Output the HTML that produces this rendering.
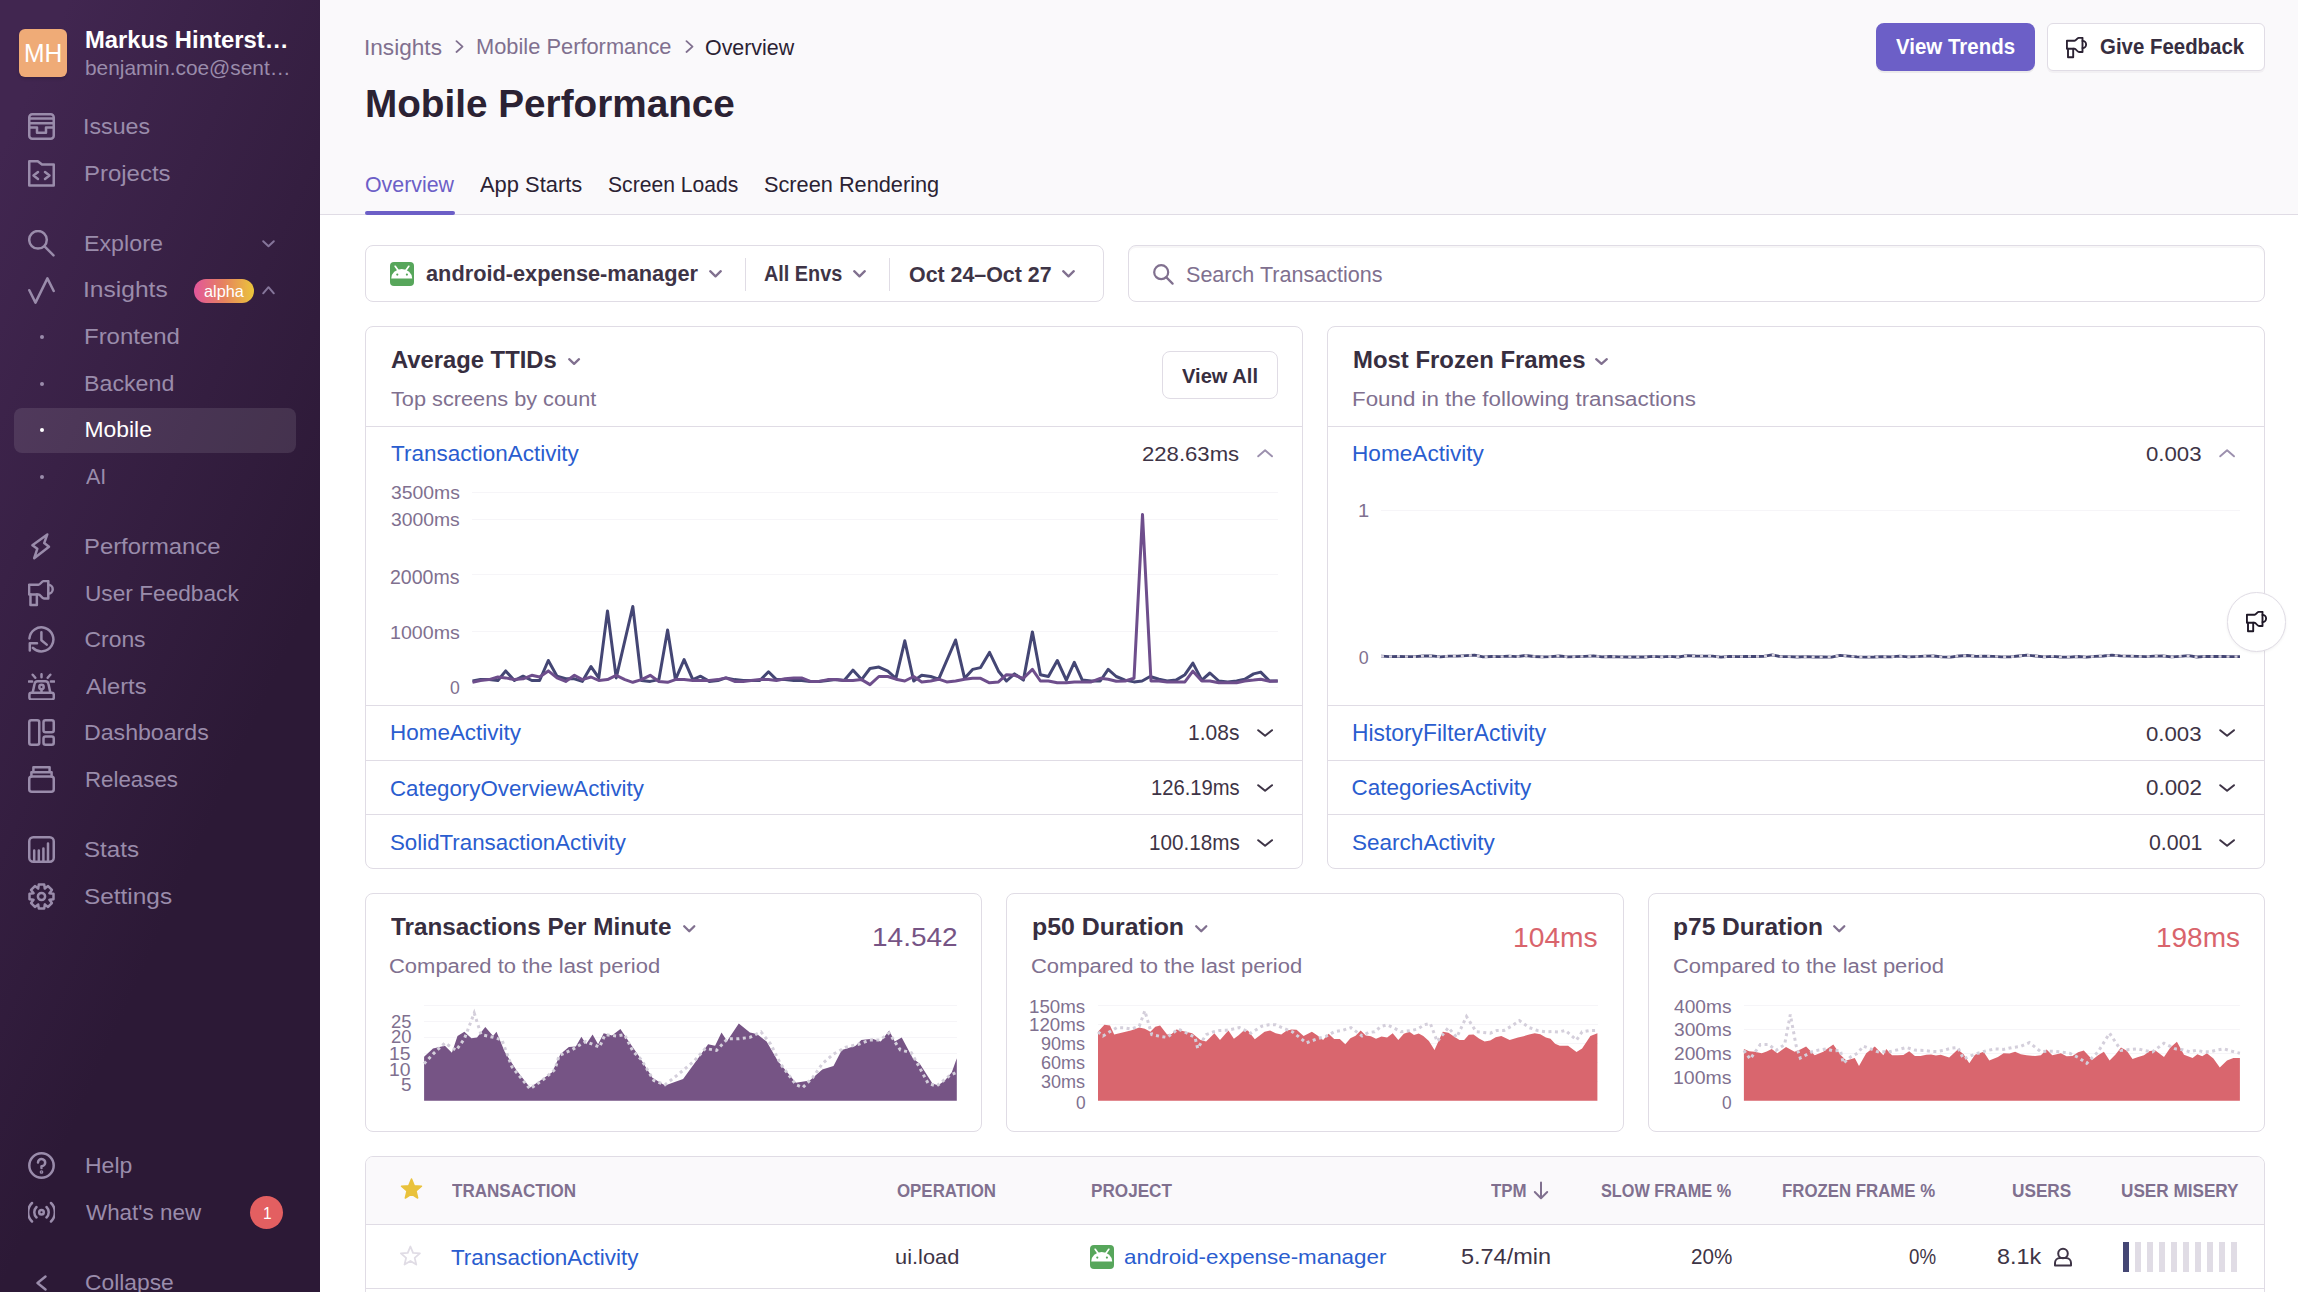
<!DOCTYPE html>
<html><head><meta charset="utf-8"><style>
html,body{margin:0;padding:0;width:2298px;height:1292px;overflow:hidden;background:#fff;font-family:"Liberation Sans",sans-serif}
.a{position:absolute;display:block}
.t{position:absolute;white-space:nowrap;line-height:1;transform-origin:0 0}
</style></head><body>
<div class="a" style="left:0px;top:0px;width:320px;height:1292px;background:linear-gradient(294.17deg,#2c1936 35.57%,#412650 92.42%,#412650 92.42%)"></div>
<div class="a" style="left:19px;top:29px;width:48px;height:48px;background:#efab77;border-radius:6px;box-shadow:0 2px 3px rgba(0,0,0,.15)"></div>
<div class="a" style="left:14px;top:408px;width:282px;height:45px;background:rgba(255,255,255,.1);border-radius:8px"></div>
<div class="a" style="left:40px;top:335px;width:4px;height:4px;background:#9a8cab;border-radius:50%"></div>
<div class="a" style="left:40px;top:381.5px;width:4px;height:4.0px;background:#9a8cab;border-radius:50%"></div>
<div class="a" style="left:40px;top:428px;width:4px;height:4px;background:#fff;border-radius:50%"></div>
<div class="a" style="left:40px;top:474.5px;width:4px;height:4.0px;background:#9a8cab;border-radius:50%"></div>
<div class="a" style="left:194px;top:279px;width:60px;height:24px;background:linear-gradient(90deg,#e2559b,#e6835f 50%,#eac53b);border-radius:12px"></div>
<svg class="a" style="left:262px;top:240px;overflow:visible" width="13" height="7.5" fill="none" stroke="#85759a" stroke-width="2" stroke-linecap="round" stroke-linejoin="round"><path d="M1.2 1.2 L6.5 6.3 L11.8 1.2"/></svg>
<svg class="a" style="left:262px;top:286px;overflow:visible" width="13" height="8.5" fill="none" stroke="#85759a" stroke-width="2" stroke-linecap="round" stroke-linejoin="round"><path d="M1.2 7.3 L6.5 1.2 L11.8 7.3"/></svg>
<div class="a" style="left:250px;top:1196px;width:33px;height:33px;background:#e35f61;border-radius:50%"></div>
<svg class="a" style="left:28px;top:113px" width="27" height="27" viewBox="0 0 27 27" fill="none" stroke="#9a8cab" stroke-width="2.5" stroke-linecap="round" stroke-linejoin="round"><rect x="1.25" y="1.25" width="24.5" height="24.5" rx="3"/><path d="M1.25 5.5H25.75M1.25 10.2H25.75M1.25 14.5H9V19.8H18V14.5H25.75"/></svg>
<svg class="a" style="left:28px;top:160px" width="27" height="27" viewBox="0 0 27 27" fill="none" stroke="#9a8cab" stroke-width="2.5" stroke-linecap="round" stroke-linejoin="round"><path d="M1.25 1.25H9.8L14 4.6H25.75V25.5H1.25Z"/><path d="M10 12L5.5 15.5L10 19M17 12L21.5 15.5L17 19"/></svg>
<svg class="a" style="left:28px;top:230px" width="27" height="27" viewBox="0 0 27 27" fill="none" stroke="#9a8cab" stroke-width="2.5" stroke-linecap="round" stroke-linejoin="round"><circle cx="10" cy="9.8" r="8.8"/><path d="M16.8 16.6L25.5 25.3"/></svg>
<svg class="a" style="left:28px;top:277px" width="27" height="27" viewBox="0 0 27 27" fill="none" stroke="#9a8cab" stroke-width="2.5" stroke-linecap="round" stroke-linejoin="round"><path d="M1.3 13.2L7.5 25.6L19.4 1.4L25.7 14"/></svg>
<svg class="a" style="left:28px;top:533px" width="27" height="27" viewBox="0 0 27 27" fill="none" stroke="#9a8cab" stroke-width="2.5" stroke-linecap="round" stroke-linejoin="round"><path d="M19.3 1.4L4.4 12.3L9.3 15.8L6.2 25.2L21 13.8L16.2 10.1Z"/></svg>
<svg class="a" style="left:28px;top:580px" width="27" height="27" viewBox="0 0 27 27" fill="none" stroke="#9a8cab" stroke-width="2.5" stroke-linecap="round" stroke-linejoin="round"><g transform="scale(1.23)" stroke-width="2.03"><path d="M0.9 3.8H8.5C10.2 3.8 11 0.9 13 0.9H16.5V15H13C11 15 10.2 11.7 8.5 11.7H0.9Z"/><path d="M16.5 3.9A3.6 3.6 0 0 1 16.5 11.1"/><path d="M2 11.7V20.3H7.2V11.7"/></g></svg>
<svg class="a" style="left:28px;top:626px" width="27" height="27" viewBox="0 0 27 27" fill="none" stroke="#9a8cab" stroke-width="2.5" stroke-linecap="round" stroke-linejoin="round"><path d="M1.4 12.5A12 12 0 1 1 4.9 21.9"/><path d="M13.4 6.2V14.2L18.7 18.6"/><path d="M1.8 24.6V17.3H9"/></svg>
<svg class="a" style="left:28px;top:673px" width="27" height="27" viewBox="0 0 27 27" fill="none" stroke="#9a8cab" stroke-width="2.5" stroke-linecap="round" stroke-linejoin="round"><rect x="1.4" y="19.8" width="24.4" height="6.6" rx="2"/><path d="M4.7 19.6L6.6 10.8Q7 8.2 9.6 8.2H17.4Q20 8.2 20.4 10.8L22.3 19.6"/><circle cx="13.5" cy="14" r="2.2"/><path d="M13.5 16.2V19.4M13.5 1.2V4.2M4.7 1.8L7.3 4.8M22.3 1.8L19.7 4.8M0.8 8.5H4.1M26.2 8.5H22.9"/></svg>
<svg class="a" style="left:28px;top:719px" width="27" height="27" viewBox="0 0 27 27" fill="none" stroke="#9a8cab" stroke-width="2.5" stroke-linecap="round" stroke-linejoin="round"><rect x="1.25" y="1.25" width="10" height="24.5" rx="2"/><rect x="15.5" y="1.25" width="10.25" height="12" rx="2"/><rect x="15.5" y="17.6" width="10.25" height="8.15" rx="2"/></svg>
<svg class="a" style="left:28px;top:766px" width="27" height="27" viewBox="0 0 27 27" fill="none" stroke="#9a8cab" stroke-width="2.5" stroke-linecap="round" stroke-linejoin="round"><rect x="1.25" y="10.5" width="24.5" height="15.25" rx="2.5"/><path d="M3.4 10.5V6.2H23.6V10.5M5.4 6.2V1.25H21.6V6.2"/></svg>
<svg class="a" style="left:28px;top:836px" width="27" height="27" viewBox="0 0 27 27" fill="none" stroke="#9a8cab" stroke-width="2.5" stroke-linecap="round" stroke-linejoin="round"><rect x="1.25" y="1.25" width="24.5" height="24.5" rx="4"/><path d="M6.2 25V14.5M10.8 25V14.5M15.4 25V12.5M20 25V7.5"/></svg>
<svg class="a" style="left:28px;top:883px" width="27" height="27" viewBox="0 0 27 27" fill="none" stroke="#9a8cab" stroke-width="2.5" stroke-linecap="round" stroke-linejoin="round"><path d="M25.50 10.82 L25.50 16.18 L21.42 16.85 L21.47 16.73 L23.89 20.09 L20.09 23.89 L16.73 21.47 L16.85 21.42 L16.18 25.50 L10.82 25.50 L10.15 21.42 L10.27 21.47 L6.91 23.89 L3.11 20.09 L5.53 16.73 L5.58 16.85 L1.50 16.18 L1.50 10.82 L5.58 10.15 L5.53 10.27 L3.11 6.91 L6.91 3.11 L10.27 5.53 L10.15 5.58 L10.82 1.50 L16.18 1.50 L16.85 5.58 L16.73 5.53 L20.09 3.11 L23.89 6.91 L21.47 10.27 L21.42 10.15Z"/><circle cx="13.5" cy="13.5" r="3.6"/></svg>
<svg class="a" style="left:28px;top:1152px" width="27" height="27" viewBox="0 0 27 27" fill="none" stroke="#9a8cab" stroke-width="2.5" stroke-linecap="round" stroke-linejoin="round"><circle cx="13.5" cy="13.5" r="12.2"/><path d="M10 10.5A3.6 3.6 0 1 1 13.5 14.2V16"/><circle cx="13.5" cy="20" r="0.6" fill="#9586a5"/></svg>
<svg class="a" style="left:28px;top:1199px" width="27" height="27" viewBox="0 0 27 27" fill="none" stroke="#9a8cab" stroke-width="2.5" stroke-linecap="round" stroke-linejoin="round"><circle cx="13.5" cy="13.2" r="2.3"/><path d="M8.5 8A7.3 7.3 0 0 0 8.5 18.5M18.5 8A7.3 7.3 0 0 1 18.5 18.5M4 4A13 13 0 0 0 4 22.5M23 4A13 13 0 0 1 23 22.5"/></svg>
<svg class="a" style="left:35px;top:1275px" width="13" height="16" fill="none" stroke="#9a8cab" stroke-width="2.4" stroke-linecap="round" stroke-linejoin="round"><path d="M10.5 1.5L2.5 8L10.5 14.5"/></svg>
<div class="a" style="left:320px;top:0px;width:1978px;height:214px;background:#faf9fb;border-bottom:1px solid #e0dce5"></div>
<div class="a" style="left:365px;top:211px;width:90px;height:4px;background:#6c5fc7;border-radius:2px"></div>
<svg class="a" style="left:455px;top:40px" width="10" height="14" fill="none" stroke="#80708f" stroke-width="1.8" stroke-linecap="round" stroke-linejoin="round"><path d="M1.5 1.2L7.5 6.6L1.5 12"/></svg>
<svg class="a" style="left:684.5px;top:40px" width="10" height="14" fill="none" stroke="#80708f" stroke-width="1.8" stroke-linecap="round" stroke-linejoin="round"><path d="M1.5 1.2L7.5 6.6L1.5 12"/></svg>
<div class="a" style="left:1876px;top:23px;width:159px;height:48px;background:#6c5fc7;border-radius:8px;box-shadow:0 2px 0 rgba(0,0,0,.06)"></div>
<div class="a" style="left:2047px;top:23px;width:218px;height:48px;background:#fff;border:1px solid #e0dce5;border-radius:6px;box-sizing:border-box;box-shadow:0 2px 0 rgba(43,34,51,.04)"></div>
<svg class="a" style="left:2066px;top:37px" width="22" height="22" viewBox="0 0 22 22" fill="none" stroke="#2b2233" stroke-width="1.9" stroke-linecap="round" stroke-linejoin="round"><path d="M0.9 3.8H8.5C10.2 3.8 11 0.9 13 0.9H16.5V15H13C11 15 10.2 11.7 8.5 11.7H0.9Z"/><path d="M16.5 3.9A3.6 3.6 0 0 1 16.5 11.1"/><path d="M2 11.7V20.3H7.2V11.7"/></svg>
<div class="a" style="left:365px;top:245px;width:739px;height:57px;border:1px solid #e0dce5;border-radius:8px;box-sizing:border-box"></div>
<div class="a" style="left:745px;top:257.5px;width:1px;height:33.0px;background:#e0dce5"></div>
<div class="a" style="left:889px;top:257.5px;width:1px;height:33.0px;background:#e0dce5"></div>
<svg class="a" style="left:390px;top:262px" width="24" height="24"><rect width="24" height="24" rx="4" fill="#57a65b"/><path d="M1.2 16.6A10.5 9.6 0 0 1 22.2 16.6Z" fill="#fff"/><path d="M5.2 4.3L8.4 8.8M18.8 4.3L15.6 8.8" stroke="#fff" stroke-width="1.7" stroke-linecap="round"/><circle cx="7.3" cy="12.6" r="1.1" fill="#57a65b"/><circle cx="16.9" cy="12.6" r="1.1" fill="#57a65b"/></svg>
<svg class="a" style="left:709px;top:270px;overflow:visible" width="13" height="7.5" fill="none" stroke="#80708f" stroke-width="2.3" stroke-linecap="round" stroke-linejoin="round"><path d="M1.2 1.2 L6.5 6.3 L11.8 1.2"/></svg>
<svg class="a" style="left:853px;top:270px;overflow:visible" width="13" height="7.5" fill="none" stroke="#80708f" stroke-width="2.3" stroke-linecap="round" stroke-linejoin="round"><path d="M1.2 1.2 L6.5 6.3 L11.8 1.2"/></svg>
<svg class="a" style="left:1062px;top:270px;overflow:visible" width="13" height="7.5" fill="none" stroke="#80708f" stroke-width="2.3" stroke-linecap="round" stroke-linejoin="round"><path d="M1.2 1.2 L6.5 6.3 L11.8 1.2"/></svg>
<div class="a" style="left:1128px;top:245px;width:1137px;height:57px;border:1px solid #e0dce5;border-radius:8px;box-sizing:border-box;box-shadow:inset 0 2px 0 rgba(43,34,51,.04)"></div>
<svg class="a" style="left:1153px;top:263.5px" width="21" height="21" viewBox="0 0 21 21" fill="none" stroke="#80708f" stroke-width="2.2" stroke-linecap="round" stroke-linejoin="round"><circle cx="8.2" cy="8.2" r="7"/><path d="M13.4 13.4L19.6 19.6"/></svg>
<div class="a" style="left:365px;top:326px;width:938px;height:543px;border:1px solid #e0dce5;border-radius:8px;box-sizing:border-box"></div>
<div class="a" style="left:1327px;top:326px;width:938px;height:543px;border:1px solid #e0dce5;border-radius:8px;box-sizing:border-box"></div>
<div class="a" style="left:366px;top:426px;width:936px;height:1px;background:#e0dce5"></div>
<div class="a" style="left:1328px;top:426px;width:936px;height:1px;background:#e0dce5"></div>
<div class="a" style="left:366px;top:705px;width:936px;height:1px;background:#e0dce5"></div>
<div class="a" style="left:1328px;top:705px;width:936px;height:1px;background:#e0dce5"></div>
<div class="a" style="left:366px;top:760px;width:936px;height:1px;background:#e0dce5"></div>
<div class="a" style="left:1328px;top:760px;width:936px;height:1px;background:#e0dce5"></div>
<div class="a" style="left:366px;top:814px;width:936px;height:1px;background:#e0dce5"></div>
<div class="a" style="left:1328px;top:814px;width:936px;height:1px;background:#e0dce5"></div>
<div class="a" style="left:1162px;top:351px;width:116px;height:48px;border:1px solid #e0dce5;border-radius:8px;box-sizing:border-box"></div>
<svg class="a" style="left:567.6px;top:357.5px;overflow:visible" width="12.199999999999932" height="7.0" fill="none" stroke="#80708f" stroke-width="2.3" stroke-linecap="round" stroke-linejoin="round"><path d="M1.2 1.2 L6.099999999999966 5.8 L10.999999999999932 1.2"/></svg>
<svg class="a" style="left:1595px;top:357.5px;overflow:visible" width="13" height="7.0" fill="none" stroke="#80708f" stroke-width="2.3" stroke-linecap="round" stroke-linejoin="round"><path d="M1.2 1.2 L6.5 5.8 L11.8 1.2"/></svg>
<svg class="a" style="left:1256.8px;top:449px;overflow:visible" width="16.200000000000045" height="8.5" fill="none" stroke="#9c90ae" stroke-width="1.9" stroke-linecap="round" stroke-linejoin="round"><path d="M1.2 7.3 L8.100000000000023 1.2 L15.000000000000046 7.3"/></svg>
<svg class="a" style="left:2218.8px;top:449px;overflow:visible" width="16.199999999999818" height="8.5" fill="none" stroke="#9c90ae" stroke-width="1.9" stroke-linecap="round" stroke-linejoin="round"><path d="M1.2 7.3 L8.099999999999909 1.2 L14.999999999999819 7.3"/></svg>
<svg class="a" style="left:1256.8px;top:729.0px;overflow:visible" width="16.200000000000045" height="8.0" fill="none" stroke="#3e3446" stroke-width="2.0" stroke-linecap="round" stroke-linejoin="round"><path d="M1.2 1.2 L8.100000000000023 6.8 L15.000000000000046 1.2"/></svg>
<svg class="a" style="left:2218.8px;top:729.0px;overflow:visible" width="16.199999999999818" height="8.0" fill="none" stroke="#3e3446" stroke-width="2.0" stroke-linecap="round" stroke-linejoin="round"><path d="M1.2 1.2 L8.099999999999909 6.8 L14.999999999999819 1.2"/></svg>
<svg class="a" style="left:1256.8px;top:784.0px;overflow:visible" width="16.200000000000045" height="8.0" fill="none" stroke="#3e3446" stroke-width="2.0" stroke-linecap="round" stroke-linejoin="round"><path d="M1.2 1.2 L8.100000000000023 6.8 L15.000000000000046 1.2"/></svg>
<svg class="a" style="left:2218.8px;top:784.0px;overflow:visible" width="16.199999999999818" height="8.0" fill="none" stroke="#3e3446" stroke-width="2.0" stroke-linecap="round" stroke-linejoin="round"><path d="M1.2 1.2 L8.099999999999909 6.8 L14.999999999999819 1.2"/></svg>
<svg class="a" style="left:1256.8px;top:838.5px;overflow:visible" width="16.200000000000045" height="8.0" fill="none" stroke="#3e3446" stroke-width="2.0" stroke-linecap="round" stroke-linejoin="round"><path d="M1.2 1.2 L8.100000000000023 6.8 L15.000000000000046 1.2"/></svg>
<svg class="a" style="left:2218.8px;top:838.5px;overflow:visible" width="16.199999999999818" height="8.0" fill="none" stroke="#3e3446" stroke-width="2.0" stroke-linecap="round" stroke-linejoin="round"><path d="M1.2 1.2 L8.099999999999909 6.8 L14.999999999999819 1.2"/></svg>
<div class="a" style="left:365px;top:893px;width:617px;height:239px;border:1px solid #e0dce5;border-radius:8px;box-sizing:border-box"></div>
<div class="a" style="left:1006px;top:893px;width:618px;height:239px;border:1px solid #e0dce5;border-radius:8px;box-sizing:border-box"></div>
<div class="a" style="left:1648px;top:893px;width:617px;height:239px;border:1px solid #e0dce5;border-radius:8px;box-sizing:border-box"></div>
<svg class="a" style="left:682.5px;top:925px;overflow:visible" width="12.5" height="7.5" fill="none" stroke="#80708f" stroke-width="2.3" stroke-linecap="round" stroke-linejoin="round"><path d="M1.2 1.2 L6.25 6.3 L11.3 1.2"/></svg>
<svg class="a" style="left:1194.5px;top:925px;overflow:visible" width="12.5" height="7.5" fill="none" stroke="#80708f" stroke-width="2.3" stroke-linecap="round" stroke-linejoin="round"><path d="M1.2 1.2 L6.25 6.3 L11.3 1.2"/></svg>
<svg class="a" style="left:1833px;top:925px;overflow:visible" width="12.5" height="7.5" fill="none" stroke="#80708f" stroke-width="2.3" stroke-linecap="round" stroke-linejoin="round"><path d="M1.2 1.2 L6.25 6.3 L11.3 1.2"/></svg>
<div class="a" style="left:472px;top:492px;width:806px;height:1px;background:#f6f5f8"></div>
<div class="a" style="left:472px;top:519px;width:806px;height:1px;background:#f6f5f8"></div>
<div class="a" style="left:472px;top:574px;width:806px;height:1px;background:#f6f5f8"></div>
<div class="a" style="left:472px;top:631px;width:806px;height:1px;background:#f6f5f8"></div>
<div class="a" style="left:472px;top:687px;width:806px;height:1px;background:#f6f5f8"></div>
<div class="a" style="left:1381px;top:510px;width:859px;height:1px;background:#f6f5f8"></div>
<svg class="a" style="left:0;top:0" width="2298" height="1292" fill="none" stroke-linejoin="round"><polyline points="472.5,680.9 480.4,679.6 489.1,679.6 497.9,680.5 505.7,670.9 514.4,680.5 523.1,676.2 531.8,680.5 539.6,680.5 548.3,660.5 557.0,676.2 565.7,678.8 574.4,678.8 582.3,681.4 591.0,666.6 598.8,677.9 607.5,610.9 616.2,677.9 632.8,606.5 641.5,680.5 650.2,681.4 658.9,679.6 667.6,630.0 675.4,679.6 684.1,659.6 692.8,679.6 700.6,676.2 709.3,681.4 718.0,680.5 725.9,677.9 734.6,679.6 743.3,680.5 751.1,680.5 759.8,680.5 768.5,671.8 776.4,679.6 785.1,679.6 793.8,680.5 801.6,680.5 810.3,681.4 819.0,681.4 827.7,680.5 835.5,679.6 844.2,680.5 852.9,670.1 861.6,679.6 870.0,668.5 878.9,667.1 887.8,671.2 895.9,678.3 904.8,640.8 913.7,681.0 921.7,675.3 930.7,676.5 938.7,679.2 955.6,640.0 964.6,678.3 972.6,669.4 980.6,667.6 989.5,652.4 998.5,671.2 1006.5,681.0 1014.5,673.9 1023.4,680.1 1032.4,631.9 1040.4,674.7 1048.4,676.5 1057.3,660.5 1066.3,680.1 1074.3,662.3 1082.3,680.1 1091.2,681.0 1100.2,681.0 1108.2,669.4 1116.2,676.5 1125.1,680.1 1134.0,681.9 1142.1,681.0 1150.1,676.5 1159.0,679.2 1167.1,681.0 1176.0,680.1 1184.9,674.7 1192.9,663.1 1201.8,680.1 1209.9,673.0 1218.8,681.0 1227.7,681.9 1236.6,681.0 1244.7,679.2 1253.6,673.9 1260.7,672.1 1269.6,681.0 1277.7,681.0" stroke="#444674" stroke-width="3"/><polyline points="472.5,682.3 480.4,680.5 489.1,679.6 497.9,677.0 505.7,677.9 514.4,679.6 523.1,678.8 531.8,675.3 539.6,677.0 548.3,670.9 557.0,677.9 565.7,681.4 574.4,675.3 582.3,679.6 591.0,677.0 598.8,680.5 607.5,679.6 616.2,675.3 624.9,679.6 632.8,682.3 641.5,679.6 650.2,675.3 658.9,681.4 667.6,682.3 675.4,679.6 684.1,679.6 692.8,680.5 700.6,680.5 709.3,680.5 718.0,679.6 725.9,677.9 734.6,681.4 743.3,681.4 751.1,680.5 759.8,679.6 768.5,679.6 776.4,680.5 785.1,678.8 793.8,677.9 801.6,677.9 810.3,681.4 819.0,681.4 827.7,679.6 835.5,679.6 844.2,680.5 852.9,680.5 861.6,679.6 870.0,684.6 878.9,676.5 887.8,676.5 895.9,679.2 904.8,681.0 913.7,676.5 921.7,681.9 930.7,681.0 938.7,679.2 946.7,681.9 955.6,681.0 964.6,679.2 972.6,678.3 980.6,678.3 989.5,682.8 998.5,681.9 1006.5,674.7 1014.5,675.3 1023.4,678.3 1032.4,669.4 1040.4,681.0 1048.4,681.0 1057.3,682.8 1066.3,682.8 1074.3,681.9 1082.3,681.9 1091.2,681.9 1100.2,678.3 1108.2,679.2 1116.2,681.3 1125.1,681.0 1134.0,678.3 1142.5,514.5 1151.0,681.0 1159.0,681.0 1167.1,681.9 1176.0,681.9 1184.9,681.9 1192.9,671.2 1201.8,681.0 1209.9,681.0 1218.8,682.8 1227.7,682.8 1236.6,682.8 1244.7,681.0 1253.6,680.1 1260.7,679.2 1269.6,681.3 1277.7,681.0" stroke="#6e4e8c" stroke-width="3"/></svg>
<svg class="a" style="left:0;top:0" width="2298" height="1292" fill="none"><polyline points="1381.0,656.2 1389.5,656.6 1398.0,656.3 1406.5,656.6 1415.0,656.7 1423.5,656.0 1432.0,655.9 1440.5,656.9 1449.0,656.2 1457.5,656.2 1466.0,655.7 1474.5,655.1 1483.0,656.9 1491.5,656.5 1500.0,656.7 1508.5,656.1 1517.0,656.7 1525.5,655.5 1534.0,656.5 1542.5,656.8 1551.0,656.7 1559.5,656.0 1568.0,656.8 1576.5,656.6 1585.0,656.3 1593.5,655.9 1602.0,656.9 1610.5,656.5 1619.0,656.8 1627.5,657.0 1636.0,656.8 1644.5,657.0 1653.0,656.4 1661.5,656.9 1670.0,656.4 1678.5,657.0 1687.0,655.6 1695.5,656.0 1704.0,656.1 1712.5,656.2 1721.0,657.1 1729.5,656.4 1738.0,656.7 1746.5,656.3 1755.0,656.5 1763.5,656.4 1772.0,654.9 1780.5,656.6 1789.0,656.6 1797.5,657.0 1806.0,656.7 1814.5,657.0 1823.0,656.9 1831.5,657.1 1840.0,655.3 1848.5,656.1 1857.0,656.9 1865.5,657.1 1874.0,657.0 1882.5,656.6 1891.0,656.8 1899.5,656.2 1908.0,656.9 1916.5,656.6 1925.0,656.2 1933.5,656.0 1942.0,656.9 1950.5,657.1 1959.0,656.0 1967.5,655.5 1976.0,656.4 1984.5,656.1 1993.0,656.3 2001.5,656.8 2010.0,656.9 2018.5,656.0 2027.0,655.2 2035.5,656.0 2044.0,656.8 2052.5,656.3 2061.0,657.0 2069.5,657.1 2078.0,656.5 2086.5,657.1 2095.0,656.3 2103.5,656.0 2112.0,655.2 2120.5,655.9 2129.0,656.1 2137.5,656.4 2146.0,656.6 2154.5,656.1 2163.0,656.0 2171.5,656.9 2180.0,656.3 2188.5,655.7 2197.0,657.0 2205.5,656.4 2214.0,656.5 2222.5,656.5 2231.0,656.7 2240.0,656.6" stroke="#444674" stroke-width="2.8" stroke-linejoin="round"/><polyline points="1381.0,656.2 1389.5,656.6 1398.0,656.3 1406.5,656.6 1415.0,656.7 1423.5,656.0 1432.0,655.9 1440.5,656.9 1449.0,656.2 1457.5,656.2 1466.0,655.7 1474.5,655.1 1483.0,656.9 1491.5,656.5 1500.0,656.7 1508.5,656.1 1517.0,656.7 1525.5,655.5 1534.0,656.5 1542.5,656.8 1551.0,656.7 1559.5,656.0 1568.0,656.8 1576.5,656.6 1585.0,656.3 1593.5,655.9 1602.0,656.9 1610.5,656.5 1619.0,656.8 1627.5,657.0 1636.0,656.8 1644.5,657.0 1653.0,656.4 1661.5,656.9 1670.0,656.4 1678.5,657.0 1687.0,655.6 1695.5,656.0 1704.0,656.1 1712.5,656.2 1721.0,657.1 1729.5,656.4 1738.0,656.7 1746.5,656.3 1755.0,656.5 1763.5,656.4 1772.0,654.9 1780.5,656.6 1789.0,656.6 1797.5,657.0 1806.0,656.7 1814.5,657.0 1823.0,656.9 1831.5,657.1 1840.0,655.3 1848.5,656.1 1857.0,656.9 1865.5,657.1 1874.0,657.0 1882.5,656.6 1891.0,656.8 1899.5,656.2 1908.0,656.9 1916.5,656.6 1925.0,656.2 1933.5,656.0 1942.0,656.9 1950.5,657.1 1959.0,656.0 1967.5,655.5 1976.0,656.4 1984.5,656.1 1993.0,656.3 2001.5,656.8 2010.0,656.9 2018.5,656.0 2027.0,655.2 2035.5,656.0 2044.0,656.8 2052.5,656.3 2061.0,657.0 2069.5,657.1 2078.0,656.5 2086.5,657.1 2095.0,656.3 2103.5,656.0 2112.0,655.2 2120.5,655.9 2129.0,656.1 2137.5,656.4 2146.0,656.6 2154.5,656.1 2163.0,656.0 2171.5,656.9 2180.0,656.3 2188.5,655.7 2197.0,657.0 2205.5,656.4 2214.0,656.5 2222.5,656.5 2231.0,656.7 2240.0,656.6" stroke="#d9d4e0" stroke-width="2.4" stroke-dasharray="3 5"/></svg>
<div class="a" style="left:424px;top:1005.2px;width:533px;height:1.0px;background:#f6f5f8"></div>
<div class="a" style="left:424px;top:1020.5px;width:533px;height:1.0px;background:#f6f5f8"></div>
<div class="a" style="left:424px;top:1036.5px;width:533px;height:1.0px;background:#f6f5f8"></div>
<div class="a" style="left:424px;top:1052.5px;width:533px;height:1.0px;background:#f6f5f8"></div>
<div class="a" style="left:424px;top:1068.2px;width:533px;height:1.0px;background:#f6f5f8"></div>
<div class="a" style="left:424px;top:1083.9px;width:533px;height:1.0px;background:#f6f5f8"></div>
<div class="a" style="left:1098px;top:1005.2px;width:500px;height:1.0px;background:#f6f5f8"></div>
<div class="a" style="left:1098px;top:1024.2px;width:500px;height:1.0px;background:#f6f5f8"></div>
<div class="a" style="left:1098px;top:1043.2px;width:500px;height:1.0px;background:#f6f5f8"></div>
<div class="a" style="left:1098px;top:1062.2px;width:500px;height:1.0px;background:#f6f5f8"></div>
<div class="a" style="left:1098px;top:1081.2px;width:500px;height:1.0px;background:#f6f5f8"></div>
<div class="a" style="left:1744px;top:1005.2px;width:496px;height:1.0px;background:#f6f5f8"></div>
<div class="a" style="left:1744px;top:1029.0px;width:496px;height:1.0px;background:#f6f5f8"></div>
<div class="a" style="left:1744px;top:1052.8px;width:496px;height:1.0px;background:#f6f5f8"></div>
<div class="a" style="left:1744px;top:1076.5px;width:496px;height:1.0px;background:#f6f5f8"></div>
<svg class="a" style="left:0;top:0" width="2298" height="1292"><path d="M424.1 1056.8 L433.0 1048.5 L444.9 1045.7 L451.9 1052.7 L457.5 1036.0 L464.4 1031.8 L471.4 1038.2 L477.0 1037.4 L485.3 1027.0 L493.1 1036.0 L496.5 1031.8 L504.8 1052.1 L516.0 1069.4 L529.9 1087.5 L538.2 1081.9 L552.2 1072.2 L560.5 1054.1 L568.9 1047.1 L575.8 1046.5 L581.4 1036.8 L586.1 1044.3 L592.6 1034.6 L598.1 1044.3 L603.7 1033.2 L612.0 1035.4 L620.4 1029.0 L628.8 1041.5 L638.5 1055.5 L652.4 1077.7 L665.0 1085.5 L683.1 1079.1 L694.2 1063.8 L708.1 1044.3 L715.1 1045.7 L721.5 1032.6 L727.1 1041.0 L738.8 1023.4 L749.9 1032.6 L756.9 1034.0 L766.6 1041.5 L777.8 1061.0 L795.9 1082.8 L809.8 1080.5 L822.3 1069.4 L833.5 1066.0 L841.8 1049.9 L855.7 1045.7 L861.3 1040.1 L872.4 1038.7 L880.8 1041.5 L889.2 1030.4 L894.7 1041.5 L901.7 1037.4 L912.8 1058.2 L919.8 1063.8 L932.3 1083.3 L937.9 1085.5 L944.9 1080.5 L951.8 1072.2 L956.8 1058.2 L956.8 1100.8 L424.1 1100.8Z" fill="#765485"/><polyline points="424.1,1063.8 433.0,1054.1 444.9,1042.9 456.1,1050.4 464.4,1038.7 474.2,1013.1 481.1,1034.6 493.7,1037.4 502.0,1040.1 511.8,1066.6 529.9,1088.9 543.8,1079.1 555.0,1069.4 559.1,1055.5 571.7,1049.9 585.6,1041.5 599.5,1047.1 605.1,1034.6 616.2,1036.0 624.6,1034.6 632.9,1051.3 641.3,1059.6 653.8,1080.5 665.0,1084.7 677.5,1075.0 694.2,1061.0 705.3,1048.5 716.5,1050.4 727.6,1038.7 738.8,1038.7 749.9,1037.4 761.0,1031.8 770.8,1044.3 780.5,1063.8 795.9,1084.7 802.8,1087.5 812.6,1077.7 822.3,1063.8 833.5,1054.1 846.0,1047.1 858.5,1044.3 869.7,1040.1 879.4,1040.1 889.2,1033.2 900.3,1049.9 911.4,1052.7 928.1,1083.3 936.5,1086.1 950.4,1075.0 956.8,1072.2" fill="none" stroke="#d4cfdb" stroke-width="3" stroke-dasharray="3 3.5"/><path d="M1098.0 1031.8 L1104.4 1024.8 L1110.0 1025.4 L1114.2 1034.6 L1122.5 1032.6 L1130.9 1030.4 L1139.3 1027.6 L1144.8 1028.8 L1150.4 1031.8 L1155.3 1026.8 L1160.1 1025.4 L1167.1 1034.6 L1171.7 1033.9 L1176.4 1029.6 L1181.0 1030.4 L1186.6 1032.0 L1192.2 1033.2 L1200.5 1040.1 L1206.1 1041.5 L1214.4 1033.2 L1220.0 1040.1 L1228.4 1030.4 L1233.9 1038.7 L1238.6 1035.3 L1243.2 1031.0 L1247.9 1030.4 L1254.8 1039.3 L1259.7 1035.6 L1264.6 1031.8 L1270.1 1030.4 L1275.7 1033.3 L1281.3 1034.6 L1286.4 1030.8 L1291.5 1029.4 L1296.6 1029.8 L1303.6 1036.0 L1311.9 1031.8 L1317.5 1035.6 L1323.1 1040.1 L1328.6 1033.7 L1334.2 1038.9 L1339.8 1038.9 L1345.3 1044.3 L1350.4 1038.3 L1355.6 1035.7 L1360.7 1030.4 L1365.8 1035.4 L1370.9 1036.3 L1376.0 1038.7 L1381.5 1036.4 L1387.1 1037.4 L1392.7 1033.2 L1398.3 1040.1 L1403.8 1033.7 L1409.4 1031.8 L1414.0 1035.0 L1418.7 1033.5 L1423.3 1036.0 L1428.9 1041.1 L1434.5 1049.9 L1442.8 1031.8 L1448.4 1032.7 L1454.0 1036.4 L1459.5 1040.1 L1464.2 1039.9 L1468.8 1034.8 L1473.5 1034.6 L1479.0 1038.5 L1484.6 1041.5 L1490.2 1040.4 L1495.7 1037.2 L1501.3 1036.0 L1509.7 1040.1 L1518.0 1037.4 L1523.6 1036.2 L1529.2 1034.6 L1534.7 1033.3 L1540.3 1034.2 L1545.9 1037.4 L1550.5 1038.7 L1555.1 1043.8 L1559.8 1045.7 L1568.1 1045.7 L1576.5 1052.1 L1582.1 1048.5 L1590.4 1036.0 L1597.4 1033.2 L1597.4 1100.8 L1098.0 1100.8Z" fill="#d9666e"/><polyline points="1098.0,1031.8 1103.0,1036.0 1110.0,1031.6 1117.0,1027.6 1123.9,1027.7 1130.9,1029.0 1139.3,1026.2 1144.8,1010.9 1151.8,1034.6 1159.4,1036.2 1167.1,1037.4 1178.2,1029.0 1186.6,1033.0 1195.0,1037.4 1197.7,1048.5 1206.1,1034.6 1213.1,1031.9 1220.0,1030.4 1226.5,1030.3 1233.0,1029.1 1239.5,1027.6 1250.7,1033.2 1261.8,1026.2 1268.8,1024.8 1275.7,1024.8 1284.1,1028.5 1292.4,1031.8 1299.4,1037.4 1306.4,1042.9 1317.5,1038.7 1325.8,1036.4 1334.2,1031.8 1342.6,1030.4 1350.9,1027.6 1362.1,1036.0 1368.3,1032.5 1374.6,1031.8 1380.9,1026.5 1387.1,1024.8 1394.1,1028.1 1401.0,1031.8 1412.2,1030.4 1418.2,1028.8 1424.3,1024.7 1430.3,1023.4 1437.2,1041.5 1448.4,1027.6 1456.7,1037.4 1466.5,1016.5 1476.2,1031.8 1483.2,1032.4 1490.2,1033.2 1497.1,1030.4 1504.1,1030.4 1511.7,1026.0 1519.4,1020.6 1529.2,1027.6 1537.5,1030.5 1545.9,1031.8 1552.4,1031.5 1558.9,1032.0 1565.4,1030.4 1576.5,1040.1 1582.1,1031.8 1589.7,1030.5 1597.4,1030.4" fill="none" stroke="#d4cfdb" stroke-width="3" stroke-dasharray="3 3.5"/><path d="M1743.9 1048.9 L1749.2 1051.3 L1754.5 1051.8 L1761.7 1053.2 L1766.7 1051.6 L1771.7 1048.9 L1777.4 1053.2 L1786.0 1046.9 L1794.6 1051.8 L1800.3 1049.6 L1806.1 1046.6 L1814.7 1055.2 L1823.3 1051.8 L1828.3 1048.0 L1833.3 1044.6 L1840.4 1054.7 L1846.2 1060.4 L1854.8 1058.1 L1859.0 1066.1 L1866.2 1053.2 L1874.8 1046.6 L1883.4 1055.2 L1886.2 1048.9 L1892.0 1055.2 L1897.7 1055.2 L1903.4 1054.9 L1909.2 1051.2 L1914.9 1055.9 L1920.6 1056.1 L1926.3 1054.7 L1931.1 1054.5 L1935.9 1055.5 L1940.7 1054.7 L1949.2 1057.5 L1957.8 1049.5 L1963.6 1054.2 L1969.3 1063.3 L1975.0 1054.7 L1983.6 1051.8 L1989.3 1060.4 L1997.9 1057.0 L2003.6 1053.2 L2009.4 1053.5 L2015.1 1051.8 L2020.8 1054.3 L2026.6 1055.2 L2035.1 1056.1 L2040.9 1055.3 L2046.6 1049.5 L2052.3 1055.2 L2060.9 1053.2 L2066.6 1056.3 L2072.4 1056.1 L2078.1 1052.2 L2083.8 1050.4 L2092.4 1059.8 L2098.1 1055.2 L2103.9 1051.8 L2109.6 1060.4 L2115.3 1054.8 L2121.0 1047.5 L2126.8 1050.8 L2132.5 1059.0 L2138.2 1056.9 L2144.0 1055.2 L2149.7 1051.1 L2155.4 1050.4 L2164.0 1057.0 L2170.4 1047.5 L2176.9 1041.8 L2184.0 1054.7 L2192.6 1058.1 L2197.4 1054.3 L2202.2 1056.2 L2206.9 1053.2 L2213.4 1058.5 L2219.8 1067.6 L2227.0 1060.4 L2233.4 1058.0 L2239.9 1058.1 L2239.9 1100.8 L1743.9 1100.8Z" fill="#d9666e"/><polyline points="1743.9,1050.4 1750.2,1059.0 1760.3,1044.6 1768.9,1044.6 1776.0,1050.4 1784.6,1044.6 1790.3,1014.6 1796.1,1045.5 1800.3,1058.1 1811.8,1051.8 1819.0,1050.0 1826.1,1048.9 1833.3,1050.8 1840.4,1050.4 1843.3,1063.3 1850.5,1057.0 1857.6,1053.2 1863.3,1046.1 1870.5,1048.8 1877.7,1051.8 1889.1,1051.8 1897.7,1049.8 1906.3,1047.5 1914.9,1050.1 1923.5,1050.4 1930.2,1051.3 1936.8,1051.5 1943.5,1050.4 1950.7,1048.3 1957.8,1047.5 1963.6,1059.0 1970.7,1055.8 1977.9,1053.2 1986.5,1050.7 1995.1,1048.9 2003.6,1049.4 2012.2,1047.5 2020.8,1046.4 2029.4,1042.6 2040.9,1051.8 2048.0,1051.1 2055.2,1051.5 2062.3,1052.1 2069.5,1053.2 2078.1,1057.4 2086.7,1063.3 2098.1,1051.8 2109.6,1033.2 2121.0,1050.4 2129.6,1049.6 2138.2,1048.9 2145.4,1050.6 2152.5,1051.8 2164.0,1043.2 2175.4,1048.9 2182.6,1049.7 2189.8,1051.8 2196.4,1050.3 2203.1,1051.6 2209.8,1051.8 2217.0,1050.0 2224.1,1048.9 2232.0,1051.3 2239.9,1053.2" fill="none" stroke="#d4cfdb" stroke-width="3" stroke-dasharray="3 3.5"/></svg>
<div class="a" style="left:2226.5px;top:592px;width:59.5px;height:59.5px;background:#fff;border:1px solid #e0dce5;border-radius:50%;box-sizing:border-box;box-shadow:0 1px 3px rgba(0,0,0,.06)"></div>
<svg class="a" style="left:2246px;top:611px" width="22" height="22" viewBox="0 0 22 22" fill="none" stroke="#1f1827" stroke-width="1.9" stroke-linecap="round" stroke-linejoin="round"><path d="M0.9 3.8H8.5C10.2 3.8 11 0.9 13 0.9H16.5V15H13C11 15 10.2 11.7 8.5 11.7H0.9Z"/><path d="M16.5 3.9A3.6 3.6 0 0 1 16.5 11.1"/><path d="M2 11.7V20.3H7.2V11.7"/></svg>
<div class="a" style="left:365px;top:1156px;width:1900px;height:244px;border:1px solid #e0dce5;border-radius:8px;box-sizing:border-box;overflow:hidden"></div>
<div class="a" style="left:366px;top:1157px;width:1898px;height:67px;background:#faf9fb;border-radius:7px 7px 0 0;border-bottom:1px solid #e0dce5"></div>
<div class="a" style="left:366px;top:1288px;width:1898px;height:1px;background:#e0dce5"></div>
<svg class="a" style="left:0;top:0" width="2298" height="1292"><path d="M411.50 1179.00 L414.28 1185.68 L421.49 1186.26 L415.99 1190.96 L417.67 1197.99 L411.50 1194.22 L405.33 1197.99 L407.01 1190.96 L401.51 1186.26 L408.72 1185.68Z" fill="#e9c23c" stroke="#e9c23c" stroke-width="1.5" stroke-linejoin="round"/><path d="M410.40 1246.50 L413.05 1252.86 L419.91 1253.41 L414.68 1257.89 L416.28 1264.59 L410.40 1261.00 L404.52 1264.59 L406.12 1257.89 L400.89 1253.41 L407.75 1252.86Z" fill="none" stroke="#e0dce5" stroke-width="1.8" stroke-linejoin="round"/></svg>
<svg class="a" style="left:1090px;top:1245px" width="24" height="24"><rect width="24" height="24" rx="4" fill="#57a65b"/><path d="M1.2 16.6A10.5 9.6 0 0 1 22.2 16.6Z" fill="#fff"/><path d="M5.2 4.3L8.4 8.8M18.8 4.3L15.6 8.8" stroke="#fff" stroke-width="1.7" stroke-linecap="round"/><circle cx="7.3" cy="12.6" r="1.1" fill="#57a65b"/><circle cx="16.9" cy="12.6" r="1.1" fill="#57a65b"/></svg>
<svg class="a" style="left:1533px;top:1181px" width="16" height="19" fill="none" stroke="#80708f" stroke-width="2" stroke-linecap="round" stroke-linejoin="round"><path d="M8 1.5V17M1.8 11L8 17.2L14.2 11"/></svg>
<svg class="a" style="left:2053px;top:1247px" width="20" height="20" fill="none" stroke="#3e3446" stroke-width="2" stroke-linejoin="round"><circle cx="10" cy="6.5" r="4.8"/><path d="M2 18.5V16A5 5 0 0 1 7 11H13A5 5 0 0 1 18 16V18.5Z"/></svg>
<div class="a" style="left:2123.0px;top:1242px;width:5.699999999999818px;height:30px;background:#444674"></div>
<div class="a" style="left:2135.05px;top:1242px;width:5.699999999999818px;height:30px;background:#e0dce5"></div>
<div class="a" style="left:2147.1px;top:1242px;width:5.700000000000273px;height:30px;background:#e0dce5"></div>
<div class="a" style="left:2159.15px;top:1242px;width:5.699999999999818px;height:30px;background:#e0dce5"></div>
<div class="a" style="left:2171.2px;top:1242px;width:5.700000000000273px;height:30px;background:#e0dce5"></div>
<div class="a" style="left:2183.25px;top:1242px;width:5.699999999999818px;height:30px;background:#e0dce5"></div>
<div class="a" style="left:2195.3px;top:1242px;width:5.699999999999818px;height:30px;background:#e0dce5"></div>
<div class="a" style="left:2207.35px;top:1242px;width:5.700000000000273px;height:30px;background:#e0dce5"></div>
<div class="a" style="left:2219.4px;top:1242px;width:5.699999999999818px;height:30px;background:#e0dce5"></div>
<div class="a" style="left:2231.45px;top:1242px;width:5.700000000000273px;height:30px;background:#e0dce5"></div>
<div class="t" style="left:23.66px;top:41.03px;font-size:25.36px;color:#ffffff;transform:scaleX(0.9716);">MH</div>
<div class="t" style="left:84.52px;top:28.39px;font-size:24.35px;color:#ffffff;font-weight:700;transform:scaleX(0.9767);">Markus Hinterst…</div>
<div class="t" style="left:84.51px;top:57.14px;font-size:21.1px;color:#9a8cab;transform:scaleX(0.989);">benjamin.coe@sent…</div>
<div class="t" style="left:83.47px;top:115.42px;font-size:22.9px;color:#9a8cab;transform:scaleX(1.013);">Issues</div>
<div class="t" style="left:84.45px;top:161.92px;font-size:22.9px;color:#9a8cab;transform:scaleX(1.0469);">Projects</div>
<div class="t" style="left:84.48px;top:231.92px;font-size:22.9px;color:#9a8cab;transform:scaleX(1.0153);">Explore</div>
<div class="t" style="left:83.35px;top:278.42px;font-size:22.9px;color:#9a8cab;transform:scaleX(1.0733);">Insights</div>
<div class="t" style="left:84.45px;top:325.42px;font-size:22.9px;color:#9a8cab;transform:scaleX(1.0464);">Frontend</div>
<div class="t" style="left:84.49px;top:371.92px;font-size:22.9px;color:#9a8cab;transform:scaleX(1.0138);">Backend</div>
<div class="t" style="left:84.5px;top:418.42px;font-size:22.9px;color:#ffffff;">Mobile</div>
<div class="t" style="left:85.5px;top:464.92px;font-size:22.9px;color:#9a8cab;transform:scaleX(0.9379);">AI</div>
<div class="t" style="left:84.46px;top:535.12px;font-size:22.9px;color:#9a8cab;transform:scaleX(1.0408);">Performance</div>
<div class="t" style="left:84.51px;top:581.92px;font-size:22.9px;color:#9a8cab;transform:scaleX(0.9905);">User Feedback</div>
<div class="t" style="left:84.5px;top:628.42px;font-size:22.9px;color:#9a8cab;">Crons</div>
<div class="t" style="left:85.5px;top:674.92px;font-size:22.9px;color:#9a8cab;transform:scaleX(1.0339);">Alerts</div>
<div class="t" style="left:84.49px;top:721.42px;font-size:22.9px;color:#9a8cab;transform:scaleX(1.0106);">Dashboards</div>
<div class="t" style="left:84.53px;top:767.92px;font-size:22.9px;color:#9a8cab;transform:scaleX(0.9742);">Releases</div>
<div class="t" style="left:84.44px;top:837.92px;font-size:22.9px;color:#9a8cab;transform:scaleX(1.0554);">Stats</div>
<div class="t" style="left:84.43px;top:884.92px;font-size:22.9px;color:#9a8cab;transform:scaleX(1.0651);">Settings</div>
<div class="t" style="left:84.5px;top:1153.92px;font-size:22.9px;color:#9a8cab;transform:scaleX(1.0039);">Help</div>
<div class="t" style="left:85.5px;top:1200.92px;font-size:22.9px;color:#9a8cab;transform:scaleX(0.9789);">What's new</div>
<div class="t" style="left:84.5px;top:1271.42px;font-size:22.9px;color:#9a8cab;transform:scaleX(0.9967);">Collapse</div>
<div class="t" style="left:204.0px;top:283.03px;font-size:16.5px;color:#ffffff;transform:scaleX(0.9855);">alpha</div>
<div class="t" style="left:262.79px;top:1205.31px;font-size:17px;color:#ffffff;transform:scaleX(0.9125);">1</div>
<div class="t" style="left:364.42px;top:36.6px;font-size:21.74px;color:#80708f;transform:scaleX(1.0406);">Insights</div>
<div class="t" style="left:476.48px;top:36.84px;font-size:21.45px;color:#80708f;transform:scaleX(1.0189);">Mobile Performance</div>
<div class="t" style="left:705.02px;top:36.6px;font-size:21.74px;color:#2b2233;transform:scaleX(0.9846);">Overview</div>
<div class="t" style="left:365.04px;top:83.63px;font-size:39.42px;color:#2b2233;font-weight:700;transform:scaleX(0.982);">Mobile Performance</div>
<div class="t" style="left:364.72px;top:173.6px;font-size:21.74px;color:#6c5fc7;transform:scaleX(0.9824);">Overview</div>
<div class="t" style="left:480.0px;top:173.6px;font-size:21.74px;color:#2b2233;transform:scaleX(1.0078);">App Starts</div>
<div class="t" style="left:608.0px;top:173.6px;font-size:21.74px;color:#2b2233;transform:scaleX(0.972);">Screen Loads</div>
<div class="t" style="left:764.0px;top:173.6px;font-size:21.74px;color:#2b2233;">Screen Rendering</div>
<div class="t" style="left:1896.0px;top:36.3px;font-size:21.74px;color:#ffffff;font-weight:700;transform:scaleX(0.9418);">View Trends</div>
<div class="t" style="left:2100.0px;top:36.3px;font-size:21.74px;color:#372e40;font-weight:700;transform:scaleX(0.9395);">Give Feedback</div>
<div class="t" style="left:426.0px;top:263.9px;font-size:21.38px;color:#3e3446;font-weight:700;transform:scaleX(1.0178);">android-expense-manager</div>
<div class="t" style="left:764.0px;top:263.23px;font-size:22.17px;color:#3e3446;font-weight:700;transform:scaleX(0.8955);">All Envs</div>
<div class="t" style="left:908.5px;top:263.6px;font-size:21.74px;color:#3e3446;font-weight:700;transform:scaleX(0.9835);">Oct 24–Oct 27</div>
<div class="t" style="left:1186.0px;top:263.6px;font-size:21.74px;color:#80708f;transform:scaleX(0.9917);">Search Transactions</div>
<div class="t" style="left:391.0px;top:348.14px;font-size:24.64px;color:#372e40;font-weight:700;transform:scaleX(0.9659);">Average TTIDs</div>
<div class="t" style="left:391.0px;top:389.46px;font-size:20.72px;color:#80708f;transform:scaleX(1.0483);">Top screens by count</div>
<div class="t" style="left:1182.0px;top:365.22px;font-size:21.01px;color:#372e40;font-weight:700;transform:scaleX(0.9583);">View All</div>
<div class="t" style="left:391.0px;top:443.1px;font-size:21.74px;color:#2a5dcf;transform:scaleX(1.0346);">TransactionActivity</div>
<div class="t" style="left:1141.93px;top:443.97px;font-size:20.71px;color:#3e3446;transform:scaleX(1.0685);">228.63ms</div>
<div class="t" style="left:391.0px;top:484.24px;font-size:18.86px;color:#80708f;transform:scaleX(1.0275);">3500ms</div>
<div class="t" style="left:391.0px;top:511.28px;font-size:18.57px;color:#80708f;transform:scaleX(1.0417);">3000ms</div>
<div class="t" style="left:390.02px;top:567.07px;font-size:20.0px;color:#80708f;transform:scaleX(0.9764);">2000ms</div>
<div class="t" style="left:389.94px;top:623.78px;font-size:18.57px;color:#80708f;transform:scaleX(1.0578);">1000ms</div>
<div class="t" style="left:450.0px;top:679.28px;font-size:18.57px;color:#80708f;transform:scaleX(0.95);">0</div>
<div class="t" style="left:390.0px;top:722.49px;font-size:22.46px;color:#2a5dcf;">HomeActivity</div>
<div class="t" style="left:1188.02px;top:723.36px;font-size:21.43px;color:#3e3446;transform:scaleX(0.9804);">1.08s</div>
<div class="t" style="left:390.03px;top:777.12px;font-size:22.9px;color:#2a5dcf;transform:scaleX(0.9734);">CategoryOverviewActivity</div>
<div class="t" style="left:1150.76px;top:778.36px;font-size:21.43px;color:#3e3446;transform:scaleX(0.9419);">126.19ms</div>
<div class="t" style="left:390.01px;top:831.99px;font-size:22.46px;color:#2a5dcf;transform:scaleX(0.9929);">SolidTransactionActivity</div>
<div class="t" style="left:1148.64px;top:832.86px;font-size:21.43px;color:#3e3446;transform:scaleX(0.9646);">100.18ms</div>
<div class="t" style="left:1352.69px;top:349.01px;font-size:23.62px;color:#372e40;font-weight:700;transform:scaleX(1.0125);">Most Frozen Frames</div>
<div class="t" style="left:1351.92px;top:389.46px;font-size:20.72px;color:#80708f;transform:scaleX(1.0779);">Found in the following transactions</div>
<div class="t" style="left:1351.96px;top:443.1px;font-size:21.74px;color:#2a5dcf;transform:scaleX(1.0402);">HomeActivity</div>
<div class="t" style="left:2146.0px;top:443.97px;font-size:20.71px;color:#3e3446;transform:scaleX(1.0722);">0.003</div>
<div class="t" style="left:1357.59px;top:502.34px;font-size:18.14px;color:#80708f;transform:scaleX(1.1111);">1</div>
<div class="t" style="left:1358.7px;top:649.88px;font-size:17.86px;color:#80708f;">0</div>
<div class="t" style="left:1351.52px;top:722.37px;font-size:23.19px;color:#2a5dcf;transform:scaleX(0.9847);">HistoryFilterActivity</div>
<div class="t" style="left:2146.0px;top:723.97px;font-size:20.71px;color:#3e3446;transform:scaleX(1.0722);">0.003</div>
<div class="t" style="left:1351.5px;top:777.49px;font-size:22.46px;color:#2a5dcf;">CategoriesActivity</div>
<div class="t" style="left:2146.0px;top:778.36px;font-size:21.43px;color:#3e3446;transform:scaleX(1.0438);">0.002</div>
<div class="t" style="left:1351.5px;top:831.99px;font-size:22.46px;color:#2a5dcf;transform:scaleX(1.0034);">SearchActivity</div>
<div class="t" style="left:2148.5px;top:832.86px;font-size:21.43px;color:#3e3446;transform:scaleX(0.9963);">0.001</div>
<div class="t" style="left:391.0px;top:915.14px;font-size:24.64px;color:#372e40;font-weight:700;transform:scaleX(0.9851);">Transactions Per Minute</div>
<div class="t" style="left:871.58px;top:924.13px;font-size:26.43px;color:#765485;transform:scaleX(1.0599);">14.542</div>
<div class="t" style="left:389.44px;top:956.46px;font-size:20.72px;color:#80708f;transform:scaleX(1.0604);">Compared to the last period</div>
<div class="t" style="left:390.5px;top:1013.26px;font-size:18px;color:#80708f;transform:scaleX(1.0244);">25</div>
<div class="t" style="left:390.5px;top:1028.26px;font-size:18px;color:#80708f;transform:scaleX(1.0244);">20</div>
<div class="t" style="left:389.42px;top:1045.26px;font-size:18px;color:#80708f;transform:scaleX(1.0783);">15</div>
<div class="t" style="left:389.42px;top:1060.76px;font-size:18px;color:#80708f;transform:scaleX(1.0783);">10</div>
<div class="t" style="left:400.5px;top:1075.76px;font-size:18px;color:#80708f;transform:scaleX(1.05);">5</div>
<div class="t" style="left:1031.99px;top:915.14px;font-size:24.64px;color:#372e40;font-weight:700;transform:scaleX(1.0104);">p50 Duration</div>
<div class="t" style="left:1513.42px;top:924.03px;font-size:27.14px;color:#d9646c;transform:scaleX(1.0399);">104ms</div>
<div class="t" style="left:1030.94px;top:956.46px;font-size:20.72px;color:#80708f;transform:scaleX(1.0604);">Compared to the last period</div>
<div class="t" style="left:1028.98px;top:997.52px;font-size:18.29px;color:#80708f;transform:scaleX(1.0236);">150ms</div>
<div class="t" style="left:1028.98px;top:1016.22px;font-size:18.29px;color:#80708f;transform:scaleX(1.0236);">120ms</div>
<div class="t" style="left:1041.0px;top:1035.02px;font-size:18.29px;color:#80708f;transform:scaleX(0.9874);">90ms</div>
<div class="t" style="left:1041.0px;top:1054.22px;font-size:18.29px;color:#80708f;transform:scaleX(0.9874);">60ms</div>
<div class="t" style="left:1041.0px;top:1073.02px;font-size:18.29px;color:#80708f;transform:scaleX(0.9874);">30ms</div>
<div class="t" style="left:1075.5px;top:1093.52px;font-size:18.29px;color:#80708f;transform:scaleX(0.95);">0</div>
<div class="t" style="left:1673.0px;top:915.14px;font-size:24.64px;color:#372e40;font-weight:700;transform:scaleX(0.9969);">p75 Duration</div>
<div class="t" style="left:2155.64px;top:924.03px;font-size:27.14px;color:#d9646c;transform:scaleX(1.031);">198ms</div>
<div class="t" style="left:1672.64px;top:956.46px;font-size:20.72px;color:#80708f;transform:scaleX(1.0596);">Compared to the last period</div>
<div class="t" style="left:1673.7px;top:997.52px;font-size:18.29px;color:#80708f;transform:scaleX(1.047);">400ms</div>
<div class="t" style="left:1673.7px;top:1021.22px;font-size:18.29px;color:#80708f;transform:scaleX(1.047);">300ms</div>
<div class="t" style="left:1673.7px;top:1045.02px;font-size:18.29px;color:#80708f;transform:scaleX(1.047);">200ms</div>
<div class="t" style="left:1672.63px;top:1068.52px;font-size:18.29px;color:#80708f;transform:scaleX(1.0664);">100ms</div>
<div class="t" style="left:1721.5px;top:1093.52px;font-size:18.29px;color:#80708f;transform:scaleX(0.95);">0</div>
<div class="t" style="left:452.0px;top:1182.05px;font-size:18.84px;color:#80708f;font-weight:700;transform:scaleX(0.9053);">TRANSACTION</div>
<div class="t" style="left:897.0px;top:1182.05px;font-size:18.84px;color:#80708f;font-weight:700;transform:scaleX(0.896);">OPERATION</div>
<div class="t" style="left:1090.59px;top:1182.05px;font-size:18.84px;color:#80708f;font-weight:700;transform:scaleX(0.9104);">PROJECT</div>
<div class="t" style="left:1491.0px;top:1182.05px;font-size:18.84px;color:#80708f;font-weight:700;transform:scaleX(0.8961);">TPM</div>
<div class="t" style="left:1600.6px;top:1182.05px;font-size:18.84px;color:#80708f;font-weight:700;transform:scaleX(0.8643);">SLOW FRAME %</div>
<div class="t" style="left:1782.11px;top:1182.05px;font-size:18.84px;color:#80708f;font-weight:700;transform:scaleX(0.8929);">FROZEN FRAME %</div>
<div class="t" style="left:2011.79px;top:1182.05px;font-size:18.84px;color:#80708f;font-weight:700;transform:scaleX(0.913);">USERS</div>
<div class="t" style="left:2121.09px;top:1182.05px;font-size:18.84px;color:#80708f;font-weight:700;transform:scaleX(0.9107);">USER MISERY</div>
<div class="t" style="left:451.0px;top:1246.6px;font-size:21.74px;color:#2a5dcf;transform:scaleX(1.0319);">TransactionActivity</div>
<div class="t" style="left:894.95px;top:1247.49px;font-size:20.69px;color:#3e3446;transform:scaleX(1.0546);">ui.load</div>
<div class="t" style="left:1123.5px;top:1247.49px;font-size:20.69px;color:#2a5dcf;transform:scaleX(1.0813);">android-expense-manager</div>
<div class="t" style="left:1461.0px;top:1246.86px;font-size:21.43px;color:#3e3446;transform:scaleX(1.0954);">5.74/min</div>
<div class="t" style="left:1690.74px;top:1246.86px;font-size:21.43px;color:#3e3446;transform:scaleX(0.9635);">20%</div>
<div class="t" style="left:1909.0px;top:1246.86px;font-size:21.43px;color:#3e3446;transform:scaleX(0.8734);">0%</div>
<div class="t" style="left:1996.8px;top:1246.86px;font-size:21.43px;color:#3e3446;transform:scaleX(1.0912);">8.1k</div>
</body></html>
